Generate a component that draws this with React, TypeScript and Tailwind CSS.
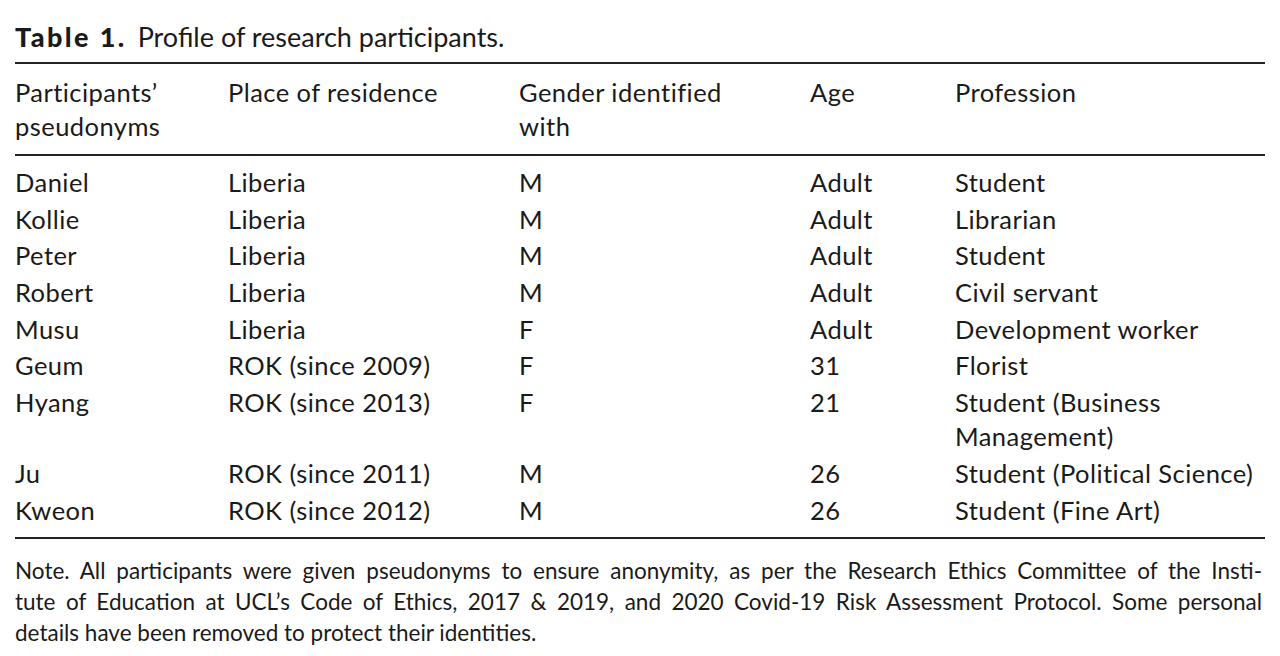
import React from 'react';

type Row = { name: string; place: string; gender: string; age: string; job: React.ReactNode };

const rows: Row[] = [
  { name: 'Daniel', place: 'Liberia', gender: 'M', age: 'Adult', job: 'Student' },
  { name: 'Kollie', place: 'Liberia', gender: 'M', age: 'Adult', job: 'Librarian' },
  { name: 'Peter', place: 'Liberia', gender: 'M', age: 'Adult', job: 'Student' },
  { name: 'Robert', place: 'Liberia', gender: 'M', age: 'Adult', job: 'Civil servant' },
  { name: 'Musu', place: 'Liberia', gender: 'F', age: 'Adult', job: 'Development worker' },
  { name: 'Geum', place: 'ROK (since 2009)', gender: 'F', age: '31', job: 'Florist' },
  {
    name: 'Hyang',
    place: 'ROK (since 2013)',
    gender: 'F',
    age: '21',
    job: (
      <>
        Student (Business
        <br />
        Management)
      </>
    ),
  },
  { name: 'Ju', place: 'ROK (since 2011)', gender: 'M', age: '26', job: 'Student (Political Science)' },
  { name: 'Kweon', place: 'ROK (since 2012)', gender: 'M', age: '26', job: 'Student (Fine Art)' },
];

// column grid: starts at 15, 228, 519, 810, 955
const cols = 'grid grid-cols-[213px_291px_291px_145px_1fr]';
const cell = 'text-[25.5px] leading-[34px] tracking-[0.45px]';

export default function App() {
  return (
    <div className="min-h-screen bg-white text-[#1a1a1a] font-['Lato','Liberation_Sans',sans-serif]">
      <div className="w-[1250px] ml-[15px] pt-[20px]">
        <div className="text-[27px] leading-[34px] whitespace-nowrap">
          <span className="font-black tracking-[2.4px]">Table 1.</span>
          <span className="ml-[11px]">Profile of research participants.</span>
        </div>

        <div className="mt-[8px] border-t-2 border-[#222]" />

        {/* header */}
        <div className={`${cols} ${cell} pt-[11px] pb-[11px]`}>
          <div>
            Participants’
            <br />
            pseudonyms
          </div>
          <div>Place of residence</div>
          <div>
            Gender identified
            <br />
            with
          </div>
          <div>Age</div>
          <div>Profession</div>
        </div>

        <div className="border-t-2 border-[#222]" />

        {/* body */}
        <div className="pt-[9px] pb-[8px]">
          {rows.map((r) => (
            <div key={r.name} className={`${cols} ${cell} pb-[2.7px]`}>
              <div>{r.name}</div>
              <div>{r.place}</div>
              <div>{r.gender}</div>
              <div>{r.age}</div>
              <div className="whitespace-nowrap">{r.job}</div>
            </div>
          ))}
        </div>

        <div className="border-t-2 border-[#222]" />

        {/* note */}
        <div className="pt-[16px] text-[22.5px] leading-[31px] w-[1247px]">
          <div className="text-justify [text-align-last:justify] whitespace-nowrap">
            Note. All participants were given pseudonyms to ensure anonymity, as per the Research Ethics Committee of the Insti-
          </div>
          <div className="text-justify [text-align-last:justify] whitespace-nowrap">
            tute of Education at UCL’s Code of Ethics, 2017 &amp; 2019, and 2020 Covid-19 Risk Assessment Protocol. Some personal
          </div>
          <div>details have been removed to protect their identities.</div>
        </div>
      </div>
    </div>
  );
}
